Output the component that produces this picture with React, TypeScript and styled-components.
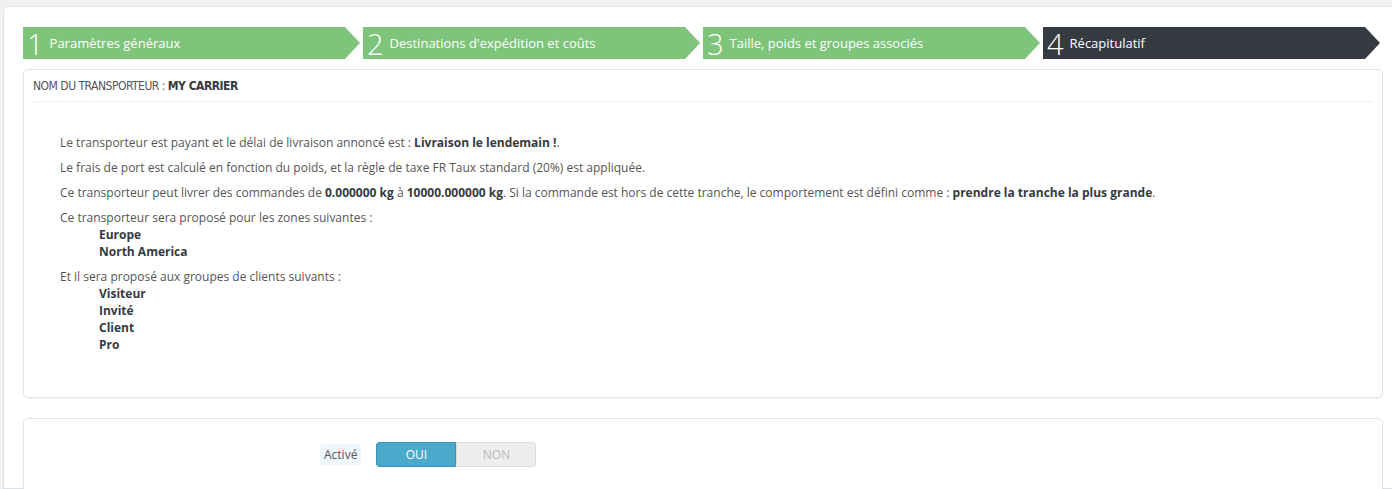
import styled, { createGlobalStyle } from "styled-components";

const GlobalStyle = createGlobalStyle`
  html, body {
    margin: 0;
    padding: 0;
    background: #eff1f2;
    font-family: "Open Sans", "DejaVu Sans", sans-serif;
    overflow: hidden;
  }
`;

const Page = styled.div`
  height: 489px;
  padding: 6px 0 0 3px;
  box-sizing: border-box;
`;

const Wrapper = styled.div`
  background: #fff;
  border: 1px solid #dfe2e4;
  border-right: none;
  border-radius: 5px 0 0 0;
  height: 100%;
  padding: 20px 9px 0 19px;
  box-sizing: border-box;
`;

const Steps = styled.div`
  display: flex;
  gap: 3px;
  margin-bottom: 10px;
`;

const Step = styled.div<{ active?: boolean }>`
  flex: 0 0 337px;
  height: 32px;
  display: flex;
  align-items: center;
  gap: 6px;
  padding-left: 4px;
  box-sizing: border-box;
  color: #fff;
  background: ${({ active }) => (active ? "#363a41" : "#7ec47a")};
  clip-path: polygon(0 0, calc(100% - 15px) 0, 100% 50%, calc(100% - 15px) 100%, 0 100%);

  .num {
    font-size: 29px;
    font-weight: 300;
    line-height: 32px;
    margin-top: 2px;
  }
  .label {
    font-size: 13px;
  }
`;

const Panel = styled.div<{ minHeight?: number }>`
  border: 1px solid #e3e3e3;
  border-radius: 5px;
  background: #fff;
  box-shadow: 0 1px 1px rgba(0, 0, 0, 0.04);
  padding: 0 9px;
  min-height: ${({ minHeight }) => (minHeight ? `${minHeight}px` : "auto")};
  box-sizing: border-box;
  margin-bottom: 20px;
`;

const PanelHeading = styled.div`
  font-family: "DejaVu Sans Condensed", "Roboto", sans-serif;
  font-size: 12px;
  letter-spacing: -0.5px;
  color: #555;
  height: 31px;
  line-height: 33px;
  border-bottom: 1px solid #eee;
  text-transform: uppercase;

  b {
    color: #363a41;
  }
`;

const Summary = styled.div`
  padding: 32px 0 0 27px;
  font-size: 12px;
  color: #555;
  line-height: 17px;

  b {
    color: #363a41;
  }
`;

const Para = styled.p`
  margin: 0 0 8px;
`;

const List = styled.ul`
  list-style: none;
  margin: 0;
  padding: 0 0 0 39px;
  font-weight: 700;
  color: #363a41;
`;

const FormRow = styled.div`
  display: flex;
  align-items: center;
  padding: 23px 0 0 287px;
`;

const Label = styled.span`
  font-size: 12px;
  color: #555;
  background: #eef7fb;
  border-radius: 3px;
  padding: 2px 4px;
  margin-right: 15px;
`;

const Switch = styled.div`
  display: flex;
  height: 25px;
  width: 160px;
  border-radius: 3px;
  overflow: hidden;
`;

const SwitchOption = styled.div<{ on?: boolean }>`
  flex: 1;
  display: flex;
  align-items: center;
  justify-content: center;
  font-size: 12px;
  background: ${({ on }) => (on ? "#4ba9cb" : "#eee")};
  color: ${({ on }) => (on ? "#fff" : "#bbb")};
  border: 1px solid ${({ on }) => (on ? "#3e95b6" : "#dcdcdc")};
  border-radius: ${({ on }) => (on ? "3px 0 0 3px" : "0 3px 3px 0")};
`;

const steps = [
  "Paramètres généraux",
  "Destinations d'expédition et coûts",
  "Taille, poids et groupes associés",
  "Récapitulatif",
];

export default function App() {
  return (
    <>
      <GlobalStyle />
      <Page>
        <Wrapper>
          <Steps>
            {steps.map((s, i) => (
              <Step key={s} active={i === 3}>
                <span className="num">{i + 1}</span>
                <span className="label">{s}</span>
              </Step>
            ))}
          </Steps>

          <Panel minHeight={329}>
            <PanelHeading>
              Nom du transporteur : <b>My carrier</b>
            </PanelHeading>
            <Summary>
              <Para>
                Le transporteur est payant et le délai de livraison annoncé est : <b>Livraison le lendemain !</b>.
              </Para>
              <Para>
                Le frais de port est calculé en fonction du poids, et la règle de taxe FR Taux standard (20%) est appliquée.
              </Para>
              <Para>
                Ce transporteur peut livrer des commandes de <b>0.000000 kg</b> à <b>10000.000000 kg</b>. Si la commande est hors de cette tranche, le comportement est défini comme : <b>prendre la tranche la plus grande</b>.
              </Para>
              <Para>
                Ce transporteur sera proposé pour les zones suivantes :
                <List>
                  <li>Europe</li>
                  <li>North America</li>
                </List>
              </Para>
              <Para>
                Et il sera proposé aux groupes de clients suivants :
                <List>
                  <li>Visiteur</li>
                  <li>Invité</li>
                  <li>Client</li>
                  <li>Pro</li>
                </List>
              </Para>
            </Summary>
          </Panel>

          <Panel minHeight={90}>
            <FormRow>
              <Label>Activé</Label>
              <Switch>
                <SwitchOption on>OUI</SwitchOption>
                <SwitchOption>NON</SwitchOption>
              </Switch>
            </FormRow>
          </Panel>
        </Wrapper>
      </Page>
    </>
  );
}
